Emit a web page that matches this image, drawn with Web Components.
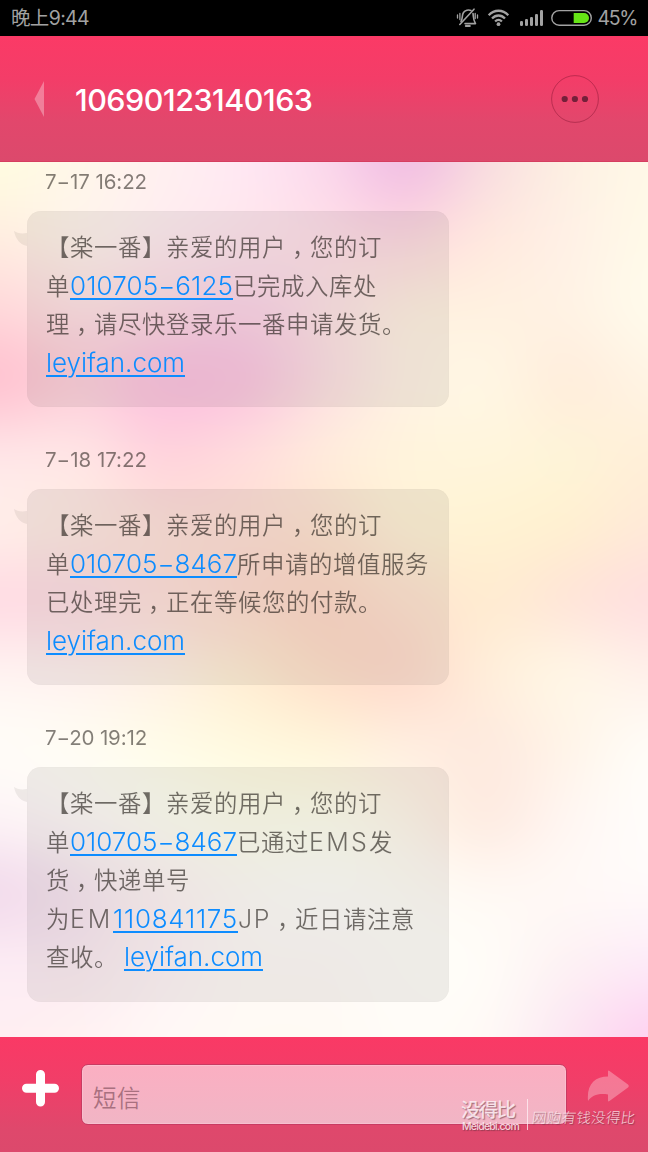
<!DOCTYPE html>
<html lang="zh-CN">
<head>
<meta charset="utf-8">
<title>短信</title>
<style>
html,body{margin:0;padding:0;overflow:hidden}
body{width:648px;height:1152px;font-family:Inter,"Noto Sans CJK SC",sans-serif}
</style>
</head>
<body>
<sms-app>
  <status-bar slot="status"></status-bar>
  <title-bar slot="title"><fit-text w="237.5">10690123140163</fit-text></title-bar>
  <message-item><fit-text slot="date" w="102">7−17 16:22</fit-text>
    <text-line>【楽一番】亲爱的用户<wide-comma></wide-comma>您的订</text-line>
    <text-line>单<fit-text link w="163">010705−6125</fit-text>已完成入库处</text-line>
    <text-line>理<wide-comma></wide-comma>请尽快登录乐一番申请发货。</text-line>
    <text-line><fit-text link w="139">leyifan.com</fit-text></text-line>
  </message-item>
  <message-item><fit-text slot="date" w="102">7−18 17:22</fit-text>
    <text-line>【楽一番】亲爱的用户<wide-comma></wide-comma>您的订</text-line>
    <text-line>单<fit-text link w="167">010705−8467</fit-text>所申请的增值服务</text-line>
    <text-line>已处理完<wide-comma></wide-comma>正在等候您的付款。</text-line>
    <text-line><fit-text link w="139">leyifan.com</fit-text></text-line>
  </message-item>
  <message-item><fit-text slot="date" w="102">7−20 19:12</fit-text>
    <text-line>【楽一番】亲爱的用户<wide-comma></wide-comma>您的订</text-line>
    <text-line>单<fit-text link w="167">010705−8467</fit-text>已通过<fit-text latin w="60">EMS</fit-text>发</text-line>
    <text-line>货<wide-comma></wide-comma>快递单号</text-line>
    <text-line>为<fit-text latin w="43">EM</fit-text><fit-text link w="125">110841175</fit-text><fit-text latin w="33">JP</fit-text><wide-comma></wide-comma>近日请注意</text-line>
    <text-line>查收。<fit-text link gap w="139">leyifan.com</fit-text></text-line>
  </message-item>
  <compose-bar slot="compose"></compose-bar>
</sms-app>
<script>
const define = (name, html, setup) => customElements.define(name, class extends HTMLElement {
  constructor() {
    super();
    this.attachShadow({mode: 'open'}).innerHTML = html;
  }
  connectedCallback() { if (setup) setup(this); }
});

define('sms-app', `<style>
:host{display:grid;grid-template-rows:36px 126px 875px 115px;width:648px;height:1152px;overflow:hidden}
main{display:grid;overflow:hidden}
soft-wallpaper,.list{grid-area:1/1}
.list{display:flex;flex-direction:column;min-width:0;z-index:1}
</style>
<slot name="status"></slot><slot name="title"></slot>
<main><soft-wallpaper></soft-wallpaper><div class="list"><slot></slot></div></main>
<slot name="compose"></slot>`);

define('status-bar', `<style>
:host{display:flex;align-items:center;box-sizing:border-box;height:36px;background:#000;color:#a2a2a2;padding:0 11px;font-size:19.5px;line-height:36px}
.g{flex:1}
svg{display:block;width:138px;height:36px}
.p{margin-left:5px}
</style>
<fit-text w="78">晚上9:44</fit-text><span class="g"></span>
<svg viewBox="455 0 138 36" fill="none" stroke="#a2a2a2">
 <g stroke-width="1.600" stroke-linecap="round" stroke-linejoin="round">
  <path d="M461 21.500C463 18.500 461.500 15.500 463.500 12.500C465 10.300 468.500 9.300 471 10.500M473 13.500C473.600 16.500 472.800 19 475.500 23.600H465"/>
  <path d="M459.800 24.500L474 9.200"/>
  <path d="M459.900 13.500v6M457.500 15v3M475.200 13.500v5M477.500 15v3" stroke-width="1.300"/>
  <path d="M465.800 26h4" stroke-width="2"/></g>
 <g stroke-width="2.300"><path d="M488.700 15.300c5.600-6.100 14-6.100 19.600 0M492 18.500c3.800-4 9.200-4 13 0M495.100 21.500c2-2 4.800-2 6.800 0"/></g>
 <circle cx="498.500" cy="24.200" r="1.900" fill="#a2a2a2" stroke="none"/>
 <g fill="#a2a2a2" stroke="none"><rect x="520" y="21" width="3" height="5" rx="1.200"/><rect x="525" y="19" width="3" height="7" rx="1.200"/><rect x="530" y="17" width="3" height="9" rx="1.200"/><rect x="535" y="14" width="3" height="12" rx="1.200"/><rect x="540" y="10" width="3" height="16" rx="1.200"/></g>
 <rect x="551.800" y="10.600" width="39.500" height="14.600" rx="7.300" stroke-width="1.400"/>
 <path d="M573.700 13H584a5 5 0 0 1 0 10H573.700z" fill="#66e416" stroke="none"/>
</svg><span class="p"><fit-text w="39.500">45%</fit-text></span>`);

define('title-bar', `<style>
:host{display:flex;align-items:center;box-sizing:border-box;height:126px;padding:0 49px 0 34px;background:linear-gradient(#fb3a66,#f33d68 35%,#e2476c 68%,#dc496c);border-bottom:1px solid #d63e60;color:#fff;font-size:30.500px;font-weight:450}
svg{display:block}
.name{margin:1px auto 0 31px}
</style>
<svg width="10" height="36" viewBox="0 0 10 36"><path d="M10 0V36L.5 18z" fill="#fff" fill-opacity=".32"/></svg>
<span class="name"><slot></slot></span>
<svg width="48" height="48" viewBox="0 0 48 48"><circle cx="24" cy="24" r="23.400" fill="none" stroke="#8c1736" stroke-opacity=".5"/><g fill="#74203a"><circle cx="13.700" cy="24" r="3.100"/><circle cx="23.900" cy="24" r="3.100"/><circle cx="34" cy="24" r="3.100"/></g></svg>`);

define('message-item', `<style>
:host{display:block;color:rgba(25,20,15,.6)}
.date{box-sizing:border-box;height:49px;padding:5px 0 0 45px;line-height:30px;font-size:20.500px;color:rgba(25,20,15,.54)}
.row{display:flex;align-items:flex-start;margin-bottom:33px;padding-left:14px}
svg{display:block;width:13px;height:20px;margin-top:18px}
.card{box-sizing:border-box;width:422px;padding:18px 0 24px 19px;background:rgba(20,20,10,.07);border-radius:14px;box-shadow:inset 0 0 1px rgba(60,50,30,.08)}
</style>
<div class="date"><slot name="date"></slot></div>
<div class="row"><svg viewBox="0 0 13 20"><path d="M0 1.700C3 4.500 8 5 13 4V17C6 15.500 1.500 10 0 1.700z" fill="#141400" fill-opacity=".065"/></svg><div class="card"><slot></slot></div></div>`);

define('text-line', `<style>
:host{display:block;height:38.500px;line-height:38.500px;font-size:23.400px;letter-spacing:.6px;white-space:nowrap;font-weight:350}
</style><slot></slot>`);

define('wide-comma', `<style>
:host{display:inline-block;box-sizing:border-box;width:24px;height:24px;line-height:24px;padding-left:6px;overflow:visible}
</style>，`);

define('compose-bar', `<style>
:host{display:flex;box-sizing:border-box;height:115px;padding:27px 0 0 22px;background:linear-gradient(#fa3965,#f13e68 38%,#df486c 80%,#dc496c);position:relative}
svg{display:block;flex:none}
.plus{margin-top:6px}
.field{box-sizing:border-box;width:486px;height:61px;margin-left:22px;border-radius:7px;border:1px solid #c83b62;background:linear-gradient(#fbafc2,#f1b5c5);padding:6px 0 0 11px;font-size:23.400px;letter-spacing:.6px;line-height:56px;color:#a9707f;font-weight:350;box-shadow:inset 0 0 0 1px rgba(255,210,222,.4)}
.send{margin:6px 0 0 20px}
.mark{position:absolute;left:461px;top:62px;display:flex;align-items:flex-start;color:rgba(255,240,245,.85);text-shadow:1px 1px 1px rgba(90,50,60,.55)}
.logo{display:flex;flex-direction:column;width:67px;box-sizing:border-box;border-right:1px solid rgba(255,240,245,.75);height:31px;line-height:22px;font-size:19.500px;font-weight:500}
.en{font:500 10.500px/10px Inter,sans-serif;margin-left:1px;margin-top:1px}
.hand{font-size:14.500px;line-height:20px;margin:9px 0 0 4px;transform:skewX(-8deg);font-weight:300;color:rgba(255,235,240,.85)}
</style>
<svg class="plus" width="37" height="37" viewBox="0 0 37 37"><path d="M18.500 4.500V32M4.500 18.200H32.500" stroke="#fff" stroke-width="9" stroke-linecap="round"/></svg>
<div class="field">短信</div>
<svg class="send" width="43" height="32" viewBox="0 0 43 32"><path d="M1 31C-.5 14 8 6.500 21 6.500V1.500Q21 0 22.500 1L41 14.500Q42.500 16 41 17.500L22.500 31Q21 32 21 30.500V24.500C11 23 5 25.500 1 31z" fill="#fff" fill-opacity=".3"/></svg>
<div class="mark"><div class="logo"><fit-text w="61">没得比</fit-text><span class="en"><fit-text w="57">Meidebi.com</fit-text></span></div><span class="hand"><fit-text w="106">网购有钱没得比</fit-text></span></div>`);

// Colour samples of the wallpaper, nine per row, smoothly interpolated.
const samples = `
fffde0 fff6ea fff0f0 ffe8f4 fbd8ec f0bbe3 f8dce0 fdf0e2 fff8e8
ffeee0 fff4ec ffecf0 ffe6ec ffdfe8 fed8e0 ffe8de fff0e6 fffae8
ffd8da ffe2e4 fedbe4 fdd4e8 fee2e6 fff0e0 fff1e0 fff2e4 fffbec
ffc0cf fdcfda fcc0df fbc4df fddfe2 fff2e4 fff7e4 ffecdb fff4e4
ffe6e8 ffe6e6 ffd2dc ffdcdd ffecdc fff4dc fff5dc fef4d8 ffefd8
ffeee9 ffeae0 ffe2da ffdfd4 ffe4d0 fff2d6 fff3d3 fff0d0 ffe9d8
ffdae3 fedce2 ffe0da ffdccf ffd9c8 ffe2d0 ffecd0 ffe4d8 ffdee0
fff3f1 fff1ee fff0e4 ffedd2 ffdfca ffdacb ffeeda fff7e6 fff0ea
fffdf8 fffdf3 fffce8 fff9df fff5da ffeee0 fee9de fff4e8 fffdf8
fdf3f6 fffaf8 fffff4 ffffec ffffee fff8ea feeae0 fff6f2 fffdfb
f1d9eb f8e6ef fff4f4 fffcf7 fffefa fffdf6 fff9f4 fff9f6 fffafa
fcecf4 fcebf2 fff4f6 fffaf7 fffaf7 fffdf9 fffdf8 fdf1f3 fdeaf8
ffeef2 fff2f2 fff8f6 fffaf4 fffaf4 fffcf8 fffaf6 fbe6f2 fed0f0`.trim().split('\n')
  .map(r => r.split(' ').map(h => [0, 2, 4].map(i => parseInt(h.substr(i, 2), 16))));

define('soft-wallpaper', `<style>:host{display:block;width:648px;height:875px}canvas{display:block}</style><canvas width="648" height="875"></canvas>`, el => {
  const cv = el.shadowRoot.querySelector('canvas'), cx = cv.getContext('2d');
  const W = 648, H = 875, img = cx.createImageData(W, H);
  // Half Catmull-Rom, half cubic B-spline: soft blobs without ringing.
  const weights = t => {
    const a = [(-t + 2*t*t - t*t*t)/2, (2 - 5*t*t + 3*t*t*t)/2, (t + 4*t*t - 3*t*t*t)/2, (t*t*t - t*t)/2];
    const b = [(1-t)**3/6, (3*t**3 - 6*t*t + 4)/6, (-3*t**3 + 3*t*t + 3*t + 1)/6, t**3/6];
    return a.map((v, i) => (v + b[i]) / 2);
  };
  const clamp = (v, m) => Math.max(0, Math.min(m, v));
  for (let y = 0; y < H; y++) {
    const gy = y / H * 12, iy = Math.floor(gy), wy = weights(gy - iy);
    const cols = samples[0].map((_, c) => [0, 1, 2].map(k => wy.reduce((s, w, j) => s + w * samples[clamp(iy + j - 1, 12)][c][k], 0)));
    for (let x = 0; x < W; x++) {
      const gx = x / W * 8, ix = Math.floor(gx), wx = weights(gx - ix), o = (y * W + x) * 4;
      for (let k = 0; k < 3; k++) {
        let s = 0;
        for (let j = 0; j < 4; j++) s += wx[j] * cols[clamp(ix + j - 1, 8)][k];
        img.data[o + k] = s;
      }
      img.data[o + 3] = 255;
    }
  }
  cx.putImageData(img, 0, 0);
});

// Inline text whose letter spacing is adjusted to fill the width in "w".
define('fit-text', `<style>
:host{display:inline;white-space:nowrap;letter-spacing:0}
:host([latin]){font-size:25px;font-weight:300;line-height:1}
:host([link]){color:#0d8cff;font-size:26px;font-weight:300;line-height:1;text-decoration:underline;text-decoration-thickness:1.500px;text-underline-offset:2.500px}
:host([gap]){margin-left:6px}
</style><slot></slot>`, el => {
  const n = [...el.textContent].length;
  el.style.letterSpacing = (el.getAttribute('w') - el.getBoundingClientRect().width) / n + 'px';
});
</script>
</body>
</html>
